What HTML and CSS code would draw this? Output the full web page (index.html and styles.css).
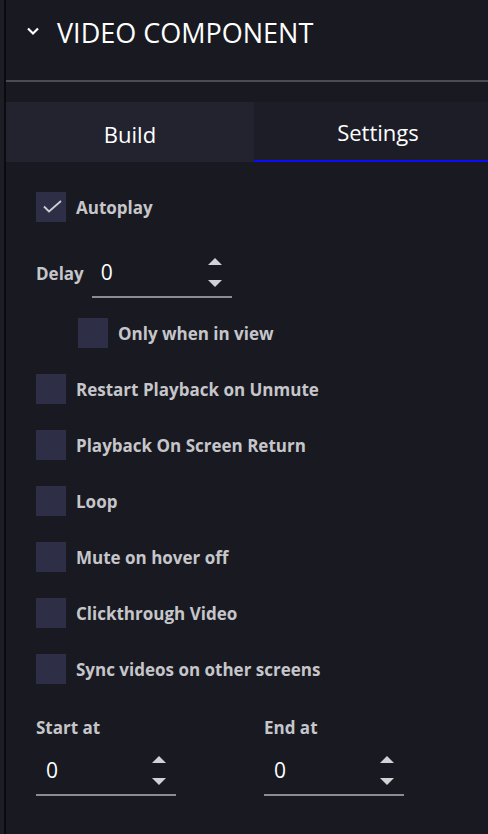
FILE: index.html
```html
<!DOCTYPE html>
<html>
<head>
<meta charset="utf-8">
<link rel="stylesheet" href="styles.css">
</head>
<body>
<div class="panel">
  <div class="header">
    <svg class="chevron" width="14" height="10" viewBox="0 0 14 10"><path d="M2 2.5 L7 7.5 L12 2.5" fill="none" stroke="#ffffff" stroke-width="2.2"/></svg>
    <span class="title">VIDEO COMPONENT</span>
  </div>
  <div class="divider"></div>
  <div class="tabs">
    <div class="tab tab-build">Build</div>
    <div class="tab tab-active">Settings</div>
  </div>
  <div class="content">
    <label class="check-row">
      <span class="box"><svg width="30" height="30" viewBox="0 0 30 30"><path d="M8 14.5 L13 19.5 L25 9" fill="none" stroke="#cfcfd6" stroke-width="1.8"/></svg></span>
      <span class="label">Autoplay</span>
    </label>
    <div class="delay-row">
      <span class="label">Delay</span>
      <div class="num-input">
        <span class="num-value">0</span>
        <span class="spin"><span class="up"></span><span class="down"></span></span>
      </div>
    </div>
    <label class="check-row sub">
      <span class="box"></span>
      <span class="label">Only when in view</span>
    </label>
    <label class="check-row"><span class="box"></span><span class="label">Restart Playback on Unmute</span></label>
    <label class="check-row"><span class="box"></span><span class="label">Playback On Screen Return</span></label>
    <label class="check-row"><span class="box"></span><span class="label">Loop</span></label>
    <label class="check-row"><span class="box"></span><span class="label">Mute on hover off</span></label>
    <label class="check-row"><span class="box"></span><span class="label">Clickthrough Video</span></label>
    <label class="check-row"><span class="box"></span><span class="label">Sync videos on other screens</span></label>
    <div class="range-row">
      <div class="field">
        <span class="label">Start at</span>
        <div class="num-input">
          <span class="num-value">0</span>
          <span class="spin"><span class="up"></span><span class="down"></span></span>
        </div>
      </div>
      <div class="field">
        <span class="label">End at</span>
        <div class="num-input">
          <span class="num-value">0</span>
          <span class="spin"><span class="up"></span><span class="down"></span></span>
        </div>
      </div>
    </div>
  </div>
</div>
</body>
</html>
```

FILE: styles.css
```css
html, body {
  margin: 0;
  padding: 0;
  background: #1c1d25;
  overflow: hidden;
  width: 488px;
  height: 834px;
}
body {
  font-family: "Open Sans", "Noto Sans", sans-serif;
}
.panel {
  margin-left: 4px;
  border-left: 2px solid #0a0b0e;
  background: #181921;
  width: 496px;
  height: 834px;
}
.header {
  height: 64px;
  display: flex;
  align-items: center;
  padding-left: 20px;
  box-sizing: border-box;
  margin-bottom: 16px;
}
.chevron {
  display: block;
  margin-top: -2px;
}
.title {
  color: #ffffff;
  font-size: 27px;
  margin-left: 17px;
}
.divider {
  height: 2px;
  background: #4a4b55;
}
.tabs {
  margin-top: 20px;
  display: grid;
  grid-template-columns: 248px 248px;
  height: 60px;
}
.tab {
  display: flex;
  align-items: center;
  justify-content: center;
  color: #ffffff;
  font-size: 22px;
  box-sizing: border-box;
  padding-top: 3px;
}
.tab-build {
  background: #22232e;
}
.tab-active {
  background: #1c1d27;
  border-bottom: 2px solid #0a0aff;
  padding-top: 1px;
}
.content {
  padding: 30px 0 0 30px;
}
.check-row {
  display: flex;
  align-items: center;
  height: 30px;
  margin-bottom: 26px;
}
.check-row.sub {
  margin-left: 42px;
}
.box {
  width: 30px;
  height: 30px;
  background: #2e2f47;
  display: block;
  flex: none;
}
.box svg {
  display: block;
}
.label {
  color: #c6c6ca;
  font-weight: 700;
  font-size: 17px;
  margin-left: 10px;
}
.delay-row {
  display: flex;
  align-items: center;
  height: 50px;
  margin-bottom: 20px;
}
.delay-row .label {
  margin-left: 0;
  margin-right: 8px;
}
.num-input {
  width: 140px;
  height: 50px;
  box-sizing: border-box;
  border-bottom: 2px solid #8a8b93;
  display: flex;
  align-items: center;
  justify-content: space-between;
  padding: 0 10px 0 9px;
}
.num-value {
  color: #ffffff;
  font-size: 21px;
}
.spin {
  display: flex;
  flex-direction: column;
  align-items: center;
  gap: 15px;
}
.up, .down {
  width: 0;
  height: 0;
  border-left: 7px solid transparent;
  border-right: 7px solid transparent;
}
.up {
  border-bottom: 7px solid #d2d2d6;
}
.down {
  border-top: 7px solid #d2d2d6;
}
.range-row {
  display: flex;
  gap: 88px;
  margin-top: 32px;
}
.field {
  display: flex;
  flex-direction: column;
}
.field .label {
  margin-left: 0;
  line-height: 24px;
  margin-bottom: 6px;
}
.field .num-input {
  height: 50px;
  padding-left: 10px;
}
```
